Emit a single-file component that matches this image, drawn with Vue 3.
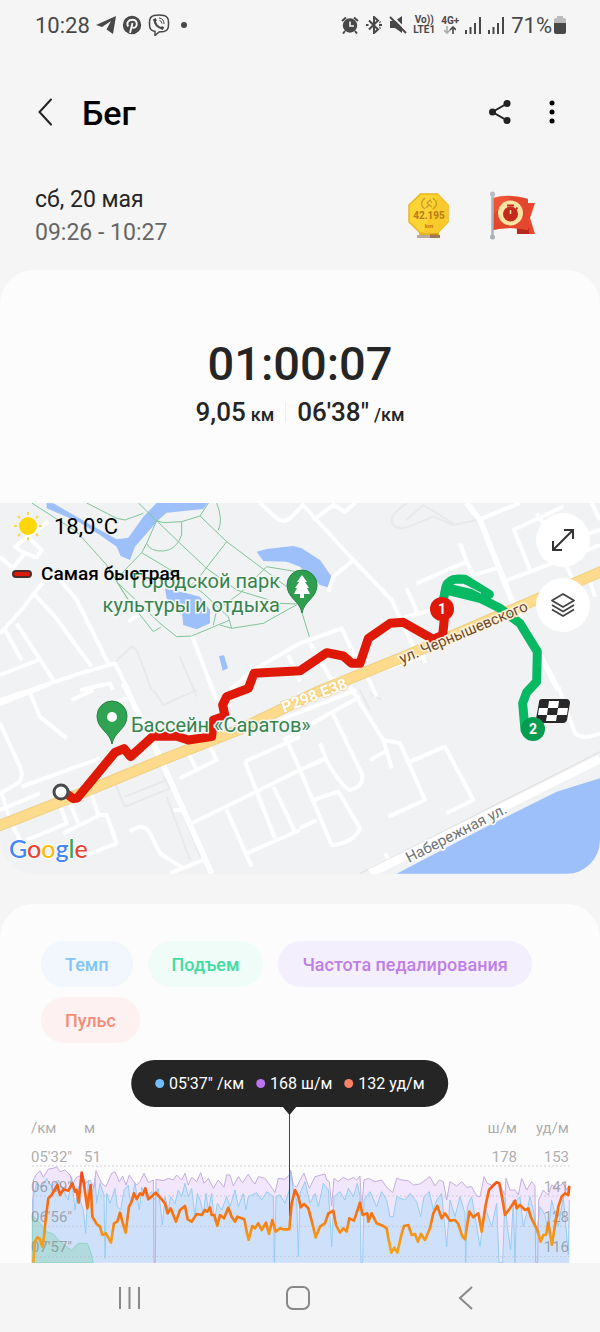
<template>
  <div class="screen">
    <div class="status">
      <span class="status-time">10:28</span>
      <svg width="20" height="18" viewBox="0 0 20 18"><path d="M0 9 20 0 17 18 10.500 13.500 15 5 6 11Z" fill="#484848" /></svg>
      <svg width="20" height="20" viewBox="0 0 20 20">
        <circle cx="10" cy="10" r="9.200" fill="#484848" />
        <path d="M6.200 11.500C4 8 6.500 4.800 10.300 4.800c6 0 5.500 8 1.300 8-1 0-1.700-.5-1.900-1.200M10.500 8 8 18" fill="none" stroke="#f5f5f5" stroke-width="1.900" />
      </svg>
      <svg width="22" height="22" viewBox="0 0 22 22" fill="none" stroke="#484848">
        <path d="M6 1.500Q11 .5 16 1.500 20.500 2.500 20.500 8v3q0 5.500-4.500 6.500l-5 .5-4 3.500v-4Q1.500 16.500 1.500 11V8Q1.500 2.500 6 1.500Z" stroke-width="1.500" />
        <path d="M6.500 5.500Q7 13 14.500 14.500" stroke-width="2.200" />
        <path d="m6.200 4.800 1.500 2.400M13 13.200l2.500 1.600" stroke-width="3" />
        <path d="M11 4q5 .5 5 6M11.500 6.500q2.500.5 2.500 3" stroke-width="1" />
      </svg>
      <i class="status-dot"></i>
      <div class="status-right">
        <svg width="18" height="18" viewBox="0 0 18 18">
          <circle cx="9" cy="9.500" r="7.200" fill="#484848" />
          <path d="M1 5 5 1.500M17 5l-4-3.500M4 15l-2 2.500M14 15l2 2.500" stroke="#484848" stroke-width="2" />
          <path d="M9 5.500V10h4" fill="none" stroke="#f5f5f5" stroke-width="1.600" />
        </svg>
        <svg width="18" height="18" viewBox="0 0 18 18" fill="none" stroke="#484848" stroke-width="2">
          <path d="m4 4.500 9 9-4 3.500V1l4 3.500-9 9" />
          <path d="M1 9h2.500M14 9h3M14.500 6l1 .5M14.500 12l1-.5" />
        </svg>
        <svg width="18" height="18" viewBox="0 0 18 18"><path d="M1 5h5l7-5v17l-7-5H1Z" fill="#484848" /><path d="m2-1 16 16" stroke="#f5f5f5" stroke-width="2" /><path d="m1 1 16 16" stroke="#484848" stroke-width="2" /></svg>
        <span class="net">Vo))<br />LTE1</span>
        <span class="net net-4g">4G+
          <svg width="12" height="8" viewBox="0 0 12 8" fill="none" stroke-width="1.600"><path d="M3 0v7M0 4l3 3 3-3" stroke="#aaa" /><path d="M9 8V1M6 4l3-3 3 3" stroke="#484848" /></svg>
        </span>
        <svg v-for="n in 2" :key="n" class="signal" width="17" height="17" viewBox="0 0 17 17" fill="#484848"><path d="M0 13h2v4H0zM4.500 10h2v7h-2zM9 6h2v11H9zM14 0h2v17h-2z" /></svg>
        <span class="battery-text">71%</span>
        <svg width="12" height="18" viewBox="0 0 12 18"><path d="M3 0h6v2h1q2 0 2 2v4H0V4q0-2 2-2h1Z" fill="#bbb" /><path d="M0 7h12v9q0 2-2 2H2q-2 0-2-2Z" fill="#484848" /></svg>
      </div>
    </div>

    <header class="header">
      <button class="icon-btn" aria-label="Назад">
        <svg width="16" height="28" viewBox="0 0 16 28"><path d="M14 1.500 2.500 14 14 26.500" fill="none" stroke="#222" stroke-width="2" stroke-linecap="round" /></svg>
      </button>
      <h1>Бег</h1>
      <button class="icon-btn share" aria-label="Поделиться">
        <svg width="22" height="24" viewBox="0 0 22 24"><path d="M18 3.500 3.500 12 18 20.500" fill="none" stroke="#222" stroke-width="2" /><g fill="#222"><circle cx="18" cy="3.500" r="3.500" /><circle cx="3.500" cy="12" r="3.500" /><circle cx="18" cy="20.500" r="3.500" /></g></svg>
      </button>
      <button class="icon-btn" aria-label="Ещё">
        <svg width="6" height="24" viewBox="0 0 6 24"><circle cx="3" cy="3" r="2.500" /><circle cx="3" cy="12" r="2.500" /><circle cx="3" cy="21" r="2.500" /></svg>
      </button>
    </header>

    <div class="date-row">
      <div class="dates">
        <div>сб, 20 мая</div>
        <div class="hours">09:26 - 10:27</div>
      </div>
      <svg class="medal" width="42" height="46" viewBox="0 0 42 46">
        <path d="M11 36h20v6H11z" fill="#e5b51c" /><path d="M9 42h13v3H9z" fill="#b9a9a0" /><path d="M22 42h10v3H22z" fill="#9d7660" /><path d="M22 38h8v4h-8z" fill="#c68b16" />
        <path d="M12.500 1h17L40 12v17L29.500 40h-17L1 29V12Z" fill="#fdd436" stroke="#e9b61f" stroke-width="1.500" />
        <path d="M30 1 40 12v17L29.500 40H15Z" fill="#f9ca2b" />
        <path d="M17 5q-7 6 0 11M25 5q7 6 0 11M18 15l3-3-2-2 3-3 2 3M20 11l4 3" fill="none" stroke="#c99a28" stroke-width="1.200" />
        <text x="21" y="26" font-size="10" font-weight="700">42.195</text>
        <text x="21" y="35" font-size="6" font-weight="700">km</text>
      </svg>
      <svg width="46" height="50" viewBox="0 0 46 50">
        <path d="M26 12h19l-5 15 5 16H27Z" fill="#e6482d" /><path d="M27 37h12v6H27z" fill="#b8281b" />
        <path d="M3 7Q18 2 38 8v31Q20 35 3 39Z" fill="#ef5436" />
        <path d="M3 24 21 6q8 0 17 2v31q-18-4-35 0Z" fill="#e4472d" />
        <path d="M2.500 3v43" stroke="#aeb2bd" stroke-width="2.500" /><circle cx="2.500" cy="3" r="2.500" fill="#b8bbc6" /><circle cx="2.500" cy="46" r="2.500" fill="#a9adb8" />
        <circle cx="20.500" cy="22" r="12.500" fill="#fce4a5" /><circle cx="20.500" cy="23" r="7.500" fill="#c4291a" />
        <path d="M17 14.500h7M26 17l1.500 1" stroke="#c4291a" stroke-width="2.200" /><path d="M20.500 19v4" stroke="#fce4a5" stroke-width="1.500" />
      </svg>
    </div>

    <section class="summary">
      <div class="totals">
        <div class="duration">01:00:07</div>
        <div class="stats">
          <span>9,05<small>км</small></span>
          <span class="pace">06'38"<small>/км</small></span>
        </div>
      </div>
      <div class="map">
        <svg class="map-svg" viewBox="0 0 600 371">
          <rect width="600" height="371" fill="#f0f2f4" />
          <g transform="translate(0 -3) scale(.33333)" fill="none" stroke-linejoin="round">
            <g fill="#9dc0fa">
              <path d="M140 9 160 10 290 85 350 118 385 113 430 50 470 9H622L610 27 500 38 475 60 405 140 390 180 362 168 350 140 300 105 235 65 140 25Z" />
              <path d="M495 265 560 280 600 290 630 330V370L590 388 550 375 545 330 500 295Z" />
              <path d="m657 468 15-2 12 39-16 7Z" />
              <path d="M770 155 800 147 880 138 905 145 960 180 995 230 993 265 960 255 900 200 860 185 790 183Z" />
              <path d="M1190 1121 1440 990 1670 875 1800 835V1121Z" />
            </g>
            <path v-for="d in faintRoads" :key="d" :d="d" stroke="#e7e9eb" stroke-width="6" />
            <path v-for="d in roads" :key="d" :d="d" stroke="#fff" stroke-width="12" />
            <path d="M370 550 470 750 635 1120M1400 9 1440 60 1535 300 1675 570" stroke="#fff" stroke-width="17" />
            <path d="M1080 1121 1800 755" stroke="#dcdee0" stroke-width="3" />
            <path d="M1110 1120 1800 777" stroke="#fff" stroke-width="26" />
            <path v-for="d in parkPaths" :key="d" :d="d" stroke="#7fc598" stroke-width="3" />
            <path :d="highway" stroke="#efcf85" stroke-width="34" />
            <path :d="highway" stroke="#fcdc8c" stroke-width="28" />
          </g>
          <text class="road-code" transform="translate(284 210) rotate(-21)">P298 E38</text>
          <g transform="translate(0 -3) scale(.33333)" fill="none" stroke-width="27" stroke-linejoin="round" stroke-linecap="round">
            <path d="M1330 300 1338 260Q1345 238 1375 237L1395 238 1468 283 1445 288 1360 268M1345 272 1440 295 1500 325 1560 370 1612 455 1610 545 1580 577 1568 610 1575 690" stroke="#08b964" />
            <path d="M190 875 220 896 232 894 345 757 372 746 392 770 460 708 530 709 565 720 635 710 640 660 675 648 668 615 680 590 745 565 762 520 900 512 980 458 1030 468 1055 490 1080 490 1105 415 1170 370 1210 367 1300 418 1328 405 1335 340" stroke="#df1908" />
            <path d="m1397 256 45 23" stroke="#f0f2f4" stroke-width="3" />
          </g>
          <g class="place">
            <text x="280" y="85" text-anchor="end">Городской парк</text>
            <text x="280" y="109" text-anchor="end">культуры и отдыха</text>
            <text x="131" y="229">Бассейн «Саратов»</text>
          </g>
          <text class="street" transform="translate(402 161) rotate(-23)">ул. Чернышевского</text>
          <text class="street street-grey" transform="translate(409 360) rotate(-27)">Набережная ул.</text>
          <path d="M302 110c-2-12-15-15-15-28a15 15 0 0 1 30 0c0 13-13 16-15 28Z" fill="#2f9e4f" stroke="#258443" />
          <path d="m302 72-5 7h2l-4 6h2l-3 6h6v4h4v-4h6l-3-6h2l-4-6h2Z" fill="#fff" />
          <path d="M112 241c-2-12-15-15-15-28a15 15 0 0 1 30 0c0 13-13 16-15 28Z" fill="#2fa352" stroke="#258443" />
          <circle cx="112" cy="214" r="5" fill="#fff" />
          <circle cx="61" cy="289" r="7" fill="#fff" stroke="#4a4a4a" stroke-width="3" />
          <g transform="translate(536 196)">
            <path d="M6 0h24q4 0 4 4l-3 17q-1 3-4 3H3q-4 0-3-4L3 3q0-3 3-3Z" fill="#282828" />
            <path d="M13 2h10l-1 7H12zM3 9h9l-1 7H2zM22 9h10l-1 7H21zM11 16h10l-1 6H10z" fill="#fff" />
          </g>
          <circle cx="442" cy="106" r="12" fill="#df1908" /><text class="lap" x="442" y="111">1</text>
          <circle cx="533" cy="226" r="12" fill="#079c50" /><text class="lap" x="533" y="231">2</text>
          <text class="google" x="9" y="355"><tspan fill="#4285f4">G</tspan><tspan fill="#ea4335">o</tspan><tspan fill="#fbbc05">o</tspan><tspan fill="#4285f4">g</tspan><tspan fill="#34a853">l</tspan><tspan fill="#ea4335">e</tspan></text>
        </svg>
        <div class="legend">
          <div class="weather">
            <svg width="28" height="28" viewBox="0 0 28 28"><circle cx="14" cy="14" r="9" fill="#ffd60a" /><path d="M14 0v3M14 25v3M0 14h3M25 14h3M4 4l2 2M22 22l2 2M4 24l2-2M22 6l2-2" stroke="#f6d84c" stroke-width="2" /></svg>
            <span>18,0°C</span>
          </div>
          <div class="fastest"><i></i><span>Самая быстрая</span></div>
        </div>
        <div class="map-tools">
          <button aria-label="Развернуть карту">
            <svg width="24" height="24" viewBox="0 0 24 24" fill="none" stroke="#333" stroke-width="2"><path d="M2 22 22 2M13 2h9v9M2 13v9h9" /></svg>
          </button>
          <button aria-label="Слои карты">
            <svg width="26" height="26" viewBox="0 0 26 26" fill="none" stroke="#444" stroke-width="1.800" stroke-linejoin="round"><path d="m13 2 11 6.500L13 15 2 8.500ZM2 13l11 6.500L24 13M2 17.500 13 24l11-6.500" /></svg>
          </button>
        </div>
      </div>
    </section>

    <section class="details">
      <div class="chips">
        <button v-for="chip in chips" :key="chip.type" class="chip" :class="'chip-' + chip.type">{{ chip.label }}</button>
      </div>
      <div class="chart">
        <div class="tooltip">
          <span v-for="item in tooltip" :key="item.type" :class="'dot-' + item.type">{{ item.value }}</span>
        </div>
        <svg class="chart-svg" viewBox="0 0 600 157">
          <defs>
            <linearGradient id="pulse" gradientUnits="userSpaceOnUse" x1="0" y1="218" x2="0" y2="460">
              <stop offset="0" stop-color="#f4471c" /><stop offset=".3" stop-color="#f9690f" /><stop offset=".55" stop-color="#f57610" /><stop offset=".75" stop-color="#f59416" /><stop offset="1" stop-color="#f5a51b" />
            </linearGradient>
          </defs>
          <g transform="translate(0 -6) scale(.33333)" fill="none" stroke-linejoin="round">
            <polygon :points="cadence + ' 1708,489'" fill="#f1e6fb" />
            <polygon :points="pace + ' 1708,489'" fill="#cfe1fa" />
            <polyline :points="pace" stroke="#94cdf3" stroke-width="3" />
            <polyline :points="cadence" stroke="#c3addf" stroke-width="3" />
            <polygon :points="elevation" fill="#b0dadb" stroke="#8dd3c6" stroke-width="3" />
            <path d="M97 198H1708M97 288H1708M97 379H1708M97 470H1708" stroke="#bcbcc8" stroke-width="3" stroke-dasharray="4 8" />
          </g>
          <g class="axis">
            <text x="31" y="27">/км</text><text x="84" y="27">м</text>
            <text x="517" y="27" text-anchor="end">ш/м</text><text x="569" y="27" text-anchor="end">уд/м</text>
            <text x="84" y="56">51</text><text x="517" y="56" text-anchor="end">178</text>
            <template v-for="row in axisRows" :key="row.y">
              <text x="31" :y="row.y">{{ row.pace }}</text>
              <text x="569" :y="row.y" text-anchor="end">{{ row.pulse }}</text>
            </template>
          </g>
          <path d="M289.500 0V110" stroke="#444" />
          <polyline :points="heartRate" transform="translate(0 -6) scale(.33333)" fill="none" stroke="url(#pulse)" stroke-width="8" stroke-linejoin="round" />
          <path d="M282 0h15l-7.500 9Z" fill="#252525" />
        </svg>
      </div>
    </section>

    <nav class="navbar">
      <button aria-label="Недавние"><svg width="24" height="24" viewBox="0 0 24 24"><path d="M2 1v22M11.500 1v22M21 1v22" stroke="#888" stroke-width="2" /></svg></button>
      <button aria-label="Главная"><svg width="24" height="24" viewBox="0 0 24 24"><rect x="1" y="1" width="22" height="22" rx="6" fill="none" stroke="#888" stroke-width="2" /></svg></button>
      <button aria-label="Назад"><svg width="24" height="24" viewBox="0 0 24 24"><path d="M18 1 6 12l12 11" fill="none" stroke="#888" stroke-width="2" /></svg></button>
    </nav>
  </div>
</template>

<script setup>
const chips = [
  { type: 'pace', label: 'Темп' },
  { type: 'climb', label: 'Подъем' },
  { type: 'cadence', label: 'Частота педалирования' },
  { type: 'pulse', label: 'Пульс' }
]

const tooltip = [
  { type: 'pace', value: '05\'37" /км' },
  { type: 'cadence', value: '168 ш/м' },
  { type: 'pulse', value: '132 уд/м' }
]

const axisRows = [
  { y: 56, pace: '05\'32"', pulse: '153' },
  { y: 86, pace: '06\'09"', pulse: '141' },
  { y: 116, pace: '06\'56"', pulse: '128' },
  { y: 146, pace: '07\'57"', pulse: '116' }
]

// --- MAP ---
const highway = 'M-10 980 200 898 480 782 720 688 960 572 1200 475 1600 302 1810 212'

const faintRoads = [
  'M340 490 395 440 410 450 455 570',
  'M540 470 590 590',
  'M1220 10Q1160 50 1180 75 1200 95 1250 70L1300 50 1360 75 1430 60M1220 60 1270 15 1360 70',
  'M345 850 375 920 510 865 490 830M375 890 500 840',
  'M460 570 490 615 590 570',
  'M500 890 570 1080M530 890 600 1070',
  'M1080 570 1110 630M1110 580 1145 600'
]

const roads = [
  'M0 170 38 205 75 160 45 140 95 100 145 65M75 160 110 172 125 150 85 112',
  'M0 400 60 335 130 245M180 240 230 300 325 490M130 240 165 235 180 240',
  'M100 280 165 350 275 500M50 370 160 540M15 390 65 480M0 525 115 480',
  'M0 600 240 520 345 490 390 580M240 570 330 550 340 570',
  'M575 405 650 600M385 365 430 335',
  'M780 9 830 55Q850 72 875 50L910 15',
  'M690 570 760 510 900 430 1025 385 1065 470M930 430 995 540 1010 535',
  'M865 465 900 545',
  'M905 10 950 60 1060 180 1175 300 1240 440',
  'M940 60 1000 15 1035 35 1065 9M1060 180 1000 230 985 275',
  'M1445 55 1560 9M1540 90 1690 20M1540 85 1590 210M1610 40 1650 100',
  'M1250 250 1400 185 1380 130M1400 185 1420 225 1490 205',
  'M1510 245 1630 200 1800 135M1700 120 1800 90M1775 9 1800 60',
  'M1700 200 1720 240M1770 245 1785 290',
  'M1220 265 1255 345M1190 360 1310 325',
  'M1095 525 1270 470 1275 490M1100 525 1130 590',
  'M0 612 145 555M90 580 120 650 200 715M0 670 60 800Q75 840 45 855L0 880M65 860 300 775M0 930 120 880',
  'M5 880 30 960M30 960 60 1020M180 915 200 970 80 1020M210 910 235 970M270 870 295 945',
  'M190 1000 300 945 320 945 350 1030 260 1065',
  'M215 600 280 570M300 620 400 590',
  'M390 995Q430 965 450 1000L480 1060 550 1105M510 1120 610 1080',
  'M540 835 650 780 630 740M565 760 590 810',
  'M575 970 900 810 970 780M735 785 900 710M735 785 825 1015M680 930 755 1100M740 1060 900 990M820 860 885 995M860 720 900 810M520 930 545 930',
  'M840 660 1070 570M850 720 990 640 1080 590M1050 560 1150 720 1200 730 1275 900 1165 950M1230 785 1335 740 1420 900 1340 940M1150 720 1175 805M1110 780 1155 755',
  'M995 635 1085 820Q1095 860 1050 870 1025 860 975 775L900 810M960 730 980 780M900 810 995 1035Q1060 1030 1080 985L1015 875 940 900M900 985 950 960',
  'M1675 560 1725 700Q1750 720 1800 700M1155 1060 1170 1085'
]

const parkPaths = [
  'M95 9 230 95 320 195 385 300 460 395 482 382',
  'M260 9 350 55 375 60 430 40',
  'M415 9 470 62 535 125 620 205 710 270 840 310 890 312',
  'M470 62 440 130 425 158 370 215 350 245 385 300',
  'M440 130Q450 155 490 153 530 150 545 105L545 65',
  'M470 62 490 68 545 65 600 48 625 9',
  'M600 48 680 125 800 215 860 260M680 125 605 222 570 260',
  'M425 158 520 215 610 280 685 350 695 385',
  'M650 9Q670 60 655 90',
  'M350 245 480 370 530 410 575 408 690 360',
  'M695 385 790 370 870 325 890 315M660 375 695 385',
  'M640 375 650 330 720 280 800 200 890 215',
  'M905 335 928 410'
]

// --- CHART ---
const heartRate = '100,488 105,425 112,412 118,415 127,440 132,410 138,350 145,295 155,285 172,255 180,285 190,268 205,272 217,250 225,275 230,270 236,308 245,218 250,240 262,325 272,255 277,350 290,372 300,380 307,405 318,400 333,428 342,370 352,365 360,338 368,368 377,398 387,320 395,305 402,280 410,297 420,280 428,285 436,265 445,298 455,290 467,278 485,298 495,310 503,340 512,325 528,365 540,330 555,318 563,358 575,365 590,342 605,345 615,330 622,335 630,322 635,345 643,345 652,378 660,345 672,355 685,323 695,350 705,365 712,350 733,358 740,395 746,420 757,378 765,385 775,370 785,390 798,368 807,402 817,360 827,395 840,385 850,388 868,388 875,310 885,270 895,290 902,322 912,312 925,325 937,370 947,412 960,380 975,370 985,340 1000,332 1008,375 1020,398 1030,385 1040,395 1048,355 1062,362 1070,338 1080,308 1088,345 1102,340 1105,365 1115,340 1130,370 1150,378 1160,385 1165,415 1174,458 1183,443 1192,458 1203,410 1212,378 1225,375 1235,405 1245,402 1254,425 1263,402 1275,420 1290,385 1300,340 1312,318 1325,355 1335,340 1350,362 1365,360 1375,372 1387,410 1395,418 1408,335 1420,352 1435,340 1445,395 1457,315 1467,270 1478,258 1490,247 1498,250 1506,290 1515,345 1530,325 1545,302 1550,325 1560,315 1575,330 1585,325 1592,350 1602,370 1612,390 1622,425 1630,405 1638,405 1645,368 1656,435 1665,375 1675,320 1685,290 1695,280 1705,285 1708,258'

const cadence = '97,488 100,240 108,225 120,212 130,232 145,207 160,205 170,200 180,215 195,210 210,225 218,250 230,232 245,225 255,250 270,240 282,262 288,212 298,235 305,250 318,260 335,220 345,215 358,245 368,228 378,255 388,225 398,240 410,255 420,245 432,220 445,248 460,240 462,488 466,488 468,238 490,242 505,235 520,240 530,225 545,240 555,220 565,255 575,232 590,245 602,218 612,250 625,235 640,265 655,240 672,262 680,225 690,225 700,258 715,230 728,248 745,222 755,240 765,252 775,230 795,235 812,258 825,278 835,235 855,238 868,225 872,210 880,255 890,262 900,240 912,220 928,265 945,230 975,222 980,240 988,245 995,318 1002,235 1015,245 1030,232 1045,240 1060,232 1070,240 1080,228 1085,330 1092,240 1105,235 1125,245 1145,240 1160,262 1178,278 1190,235 1205,240 1225,242 1240,255 1260,252 1290,230 1305,258 1318,240 1330,245 1340,300 1350,245 1370,258 1385,245 1400,262 1415,260 1430,288 1440,290 1452,230 1462,250 1475,255 1490,245 1500,255 1515,285 1518,235 1530,270 1545,270 1555,285 1565,235 1580,270 1595,245 1605,258 1607,488 1613,488 1616,300 1630,270 1645,285 1655,255 1670,262 1690,250 1700,270 1708,255'

const pace = '97,488 98,300 110,250 125,262 140,235 155,260 175,240 190,270 205,300 215,230 225,330 235,260 243,310 250,330 257,400 265,240 275,300 285,235 290,310 300,250 312,285 315,475 320,280 330,310 345,265 352,320 362,330 372,270 385,255 392,310 405,250 418,330 425,262 440,290 455,275 462,300 475,265 487,375 495,290 505,330 512,290 525,310 535,270 545,290 555,250 565,290 575,265 585,350 592,280 600,300 610,340 618,280 625,330 635,280 643,365 652,310 665,330 680,290 690,320 705,270 715,320 730,280 738,330 745,290 770,278 785,300 800,275 820,290 823,488 828,290 840,285 855,310 868,270 872,215 880,270 890,300 895,470 900,280 915,245 930,310 945,280 955,320 970,250 985,270 995,440 1002,290 1020,275 1035,300 1045,265 1060,290 1072,250 1080,290 1083,488 1088,488 1092,300 1110,275 1130,320 1145,275 1160,300 1170,350 1180,350 1190,290 1215,300 1230,280 1250,305 1262,350 1272,290 1288,275 1300,330 1310,300 1325,280 1340,440 1350,300 1365,350 1380,290 1395,340 1397,488 1402,320 1415,290 1440,440 1455,320 1475,380 1490,310 1497,488 1508,488 1515,290 1522,380 1532,450 1540,300 1545,488 1550,300 1560,290 1570,380 1580,340 1590,290 1600,330 1610,400 1620,320 1635,345 1645,400 1655,300 1675,380 1690,290 1705,465 1708,300'

const elevation = '97,345 110,360 125,375 140,395 160,402 175,420 200,440 215,450 235,430 262,430 272,455 280,489 97,489'
</script>

<style>
body {
  background: #f5f5f5;
}
</style>

<style scoped>
.screen {
  font-family: Roboto, "Noto Sans", sans-serif;
  color: #252525;
  background: #f5f5f5;
}
.screen svg { display: block; flex: none; }
button {
  display: flex;
  align-items: center;
  justify-content: center;
  border: none;
  background: none;
  padding: 0;
  font-family: inherit;
}

/* Status bar */
.status {
  display: flex;
  align-items: center;
  gap: 6px;
  height: 50px;
  padding: 0 34px 0 35px;
  color: #484848;
}
.status-time { font-size: 22px; }
.status-dot { width: 6px; height: 6px; margin-left: 5px; border-radius: 50%; background: #484848; }
.status-right { display: flex; align-items: center; gap: 6px; margin-left: auto; }
.net { font-size: 10px; line-height: 10px; font-weight: 700; text-align: center; }
.net-4g svg { margin: 0 auto; }
.battery-text { font-size: 22px; margin-right: -4px; }

/* Header */
.header {
  display: flex;
  align-items: center;
  height: 124px;
  padding: 0 45px 0 37px;
}
.header h1 { flex: 1; margin: 2px 0 0 29px; font-size: 34px; font-weight: 500; color: #000; }
.share { margin-right: 38px; }
.date-row {
  display: flex;
  align-items: center;
  gap: 40px;
  height: 96px;
  padding: 2px 64px 0 35px;
  box-sizing: border-box;
}
.dates { flex: 1; font-size: 23px; line-height: 33px; padding-bottom: 14px; }
.hours { color: #666; }
.date-row svg { margin-bottom: 14px; }
.medal text { fill: #b97b18; text-anchor: middle; }

/* Summary card */
.summary { border-radius: 34px; background: #fcfcfc; overflow: hidden; }
.totals { padding: 66px 0 71px; text-align: center; }
.duration { font-size: 47px; line-height: 56px; font-weight: 500; }
.stats { display: flex; justify-content: center; align-items: center; height: 40px; font-size: 26px; line-height: 40px; font-weight: 500; }
.stats small { margin-left: 5px; font-size: 18px; line-height: 20px; }
.pace { position: relative; margin-left: 23px; }
.pace::before { content: ""; position: absolute; left: -12px; top: 10px; width: 1px; height: 20px; background: #eee; }

/* Map */
.map { position: relative; }
.map-svg { width: 100%; height: auto; }
.place { font-size: 20px; fill: #35844e; stroke: #f5f7f7; stroke-width: 3px; paint-order: stroke; }
.street { font-size: 15px; fill: #6d4a2c; stroke: #fdf3dc; stroke-width: 3px; paint-order: stroke; }
.street-grey { fill: #6f7378; stroke: #fff; }
.road-code { font-size: 16px; font-weight: 700; fill: #fff; stroke: #f0c765; stroke-width: 1px; paint-order: stroke; }
.lap { font-size: 14px; font-weight: 700; fill: #fff; text-anchor: middle; }
.google { font-family: Lato, sans-serif; font-size: 25px; font-weight: 500; stroke: #fff; stroke-width: 2px; paint-order: stroke; }
.legend { position: absolute; left: 12px; top: 8px; color: #000; }
.weather { display: flex; align-items: center; gap: 12px; padding-left: 2px; height: 30px; font-size: 22px; }
.fastest { display: flex; align-items: center; gap: 9px; margin-top: 20px; font-size: 19px; line-height: 26px; font-weight: 500; }
.fastest i { width: 16px; height: 4px; border: 2px solid #4b2f2d; border-radius: 4px; background: #df1908; }
.map-tools { position: absolute; right: 10px; top: 10px; display: grid; gap: 11px; }
.map-tools button { width: 54px; height: 54px; border-radius: 50%; background: #fff; }

/* Details card */
.details { margin-top: 30px; padding-top: 37px; border-radius: 34px 34px 0 0; background: #fcfcfc; }
.chips { display: flex; flex-wrap: wrap; gap: 10px 15px; padding: 0 41px; }
.chip { height: 46px; padding: 0 24px; border-radius: 23px; font-size: 18px; font-weight: 500; }
.chip-pace { color: #81c5fa; background: #f1f7fd; }
.chip-climb { color: #43dba2; background: #effcf7; }
.chip-cadence { color: #c07ee8; background: #f4effc; }
.chip-pulse { color: #f58c78; background: #fdf2f1; }
.chart { position: relative; padding-top: 63px; }
.tooltip {
  position: absolute;
  left: 48.300%;
  top: 17px;
  display: flex;
  gap: 12px;
  align-items: center;
  height: 47px;
  padding: 0 24px;
  border-radius: 24px;
  background: #252525;
  color: #fff;
  font-size: 16px;
  white-space: nowrap;
  transform: translateX(-50%);
}
.tooltip span::before {
  content: "";
  display: inline-block;
  width: 9px;
  height: 9px;
  margin-right: 5px;
  border-radius: 50%;
  vertical-align: 1px;
}
.dot-pace::before { background: #6fbdfb; }
.dot-cadence::before { background: #bd74ee; }
.dot-pulse::before { background: #fb8066; }
.chart-svg { width: 100%; height: auto; }
.axis { font-size: 15px; fill: #777; fill-opacity: .6; }

/* System navigation */
.navbar {
  display: flex;
  justify-content: center;
  gap: 144px;
  padding: 23px 4px 22px 0;
  background: #f5f5f5;
}
</style>
